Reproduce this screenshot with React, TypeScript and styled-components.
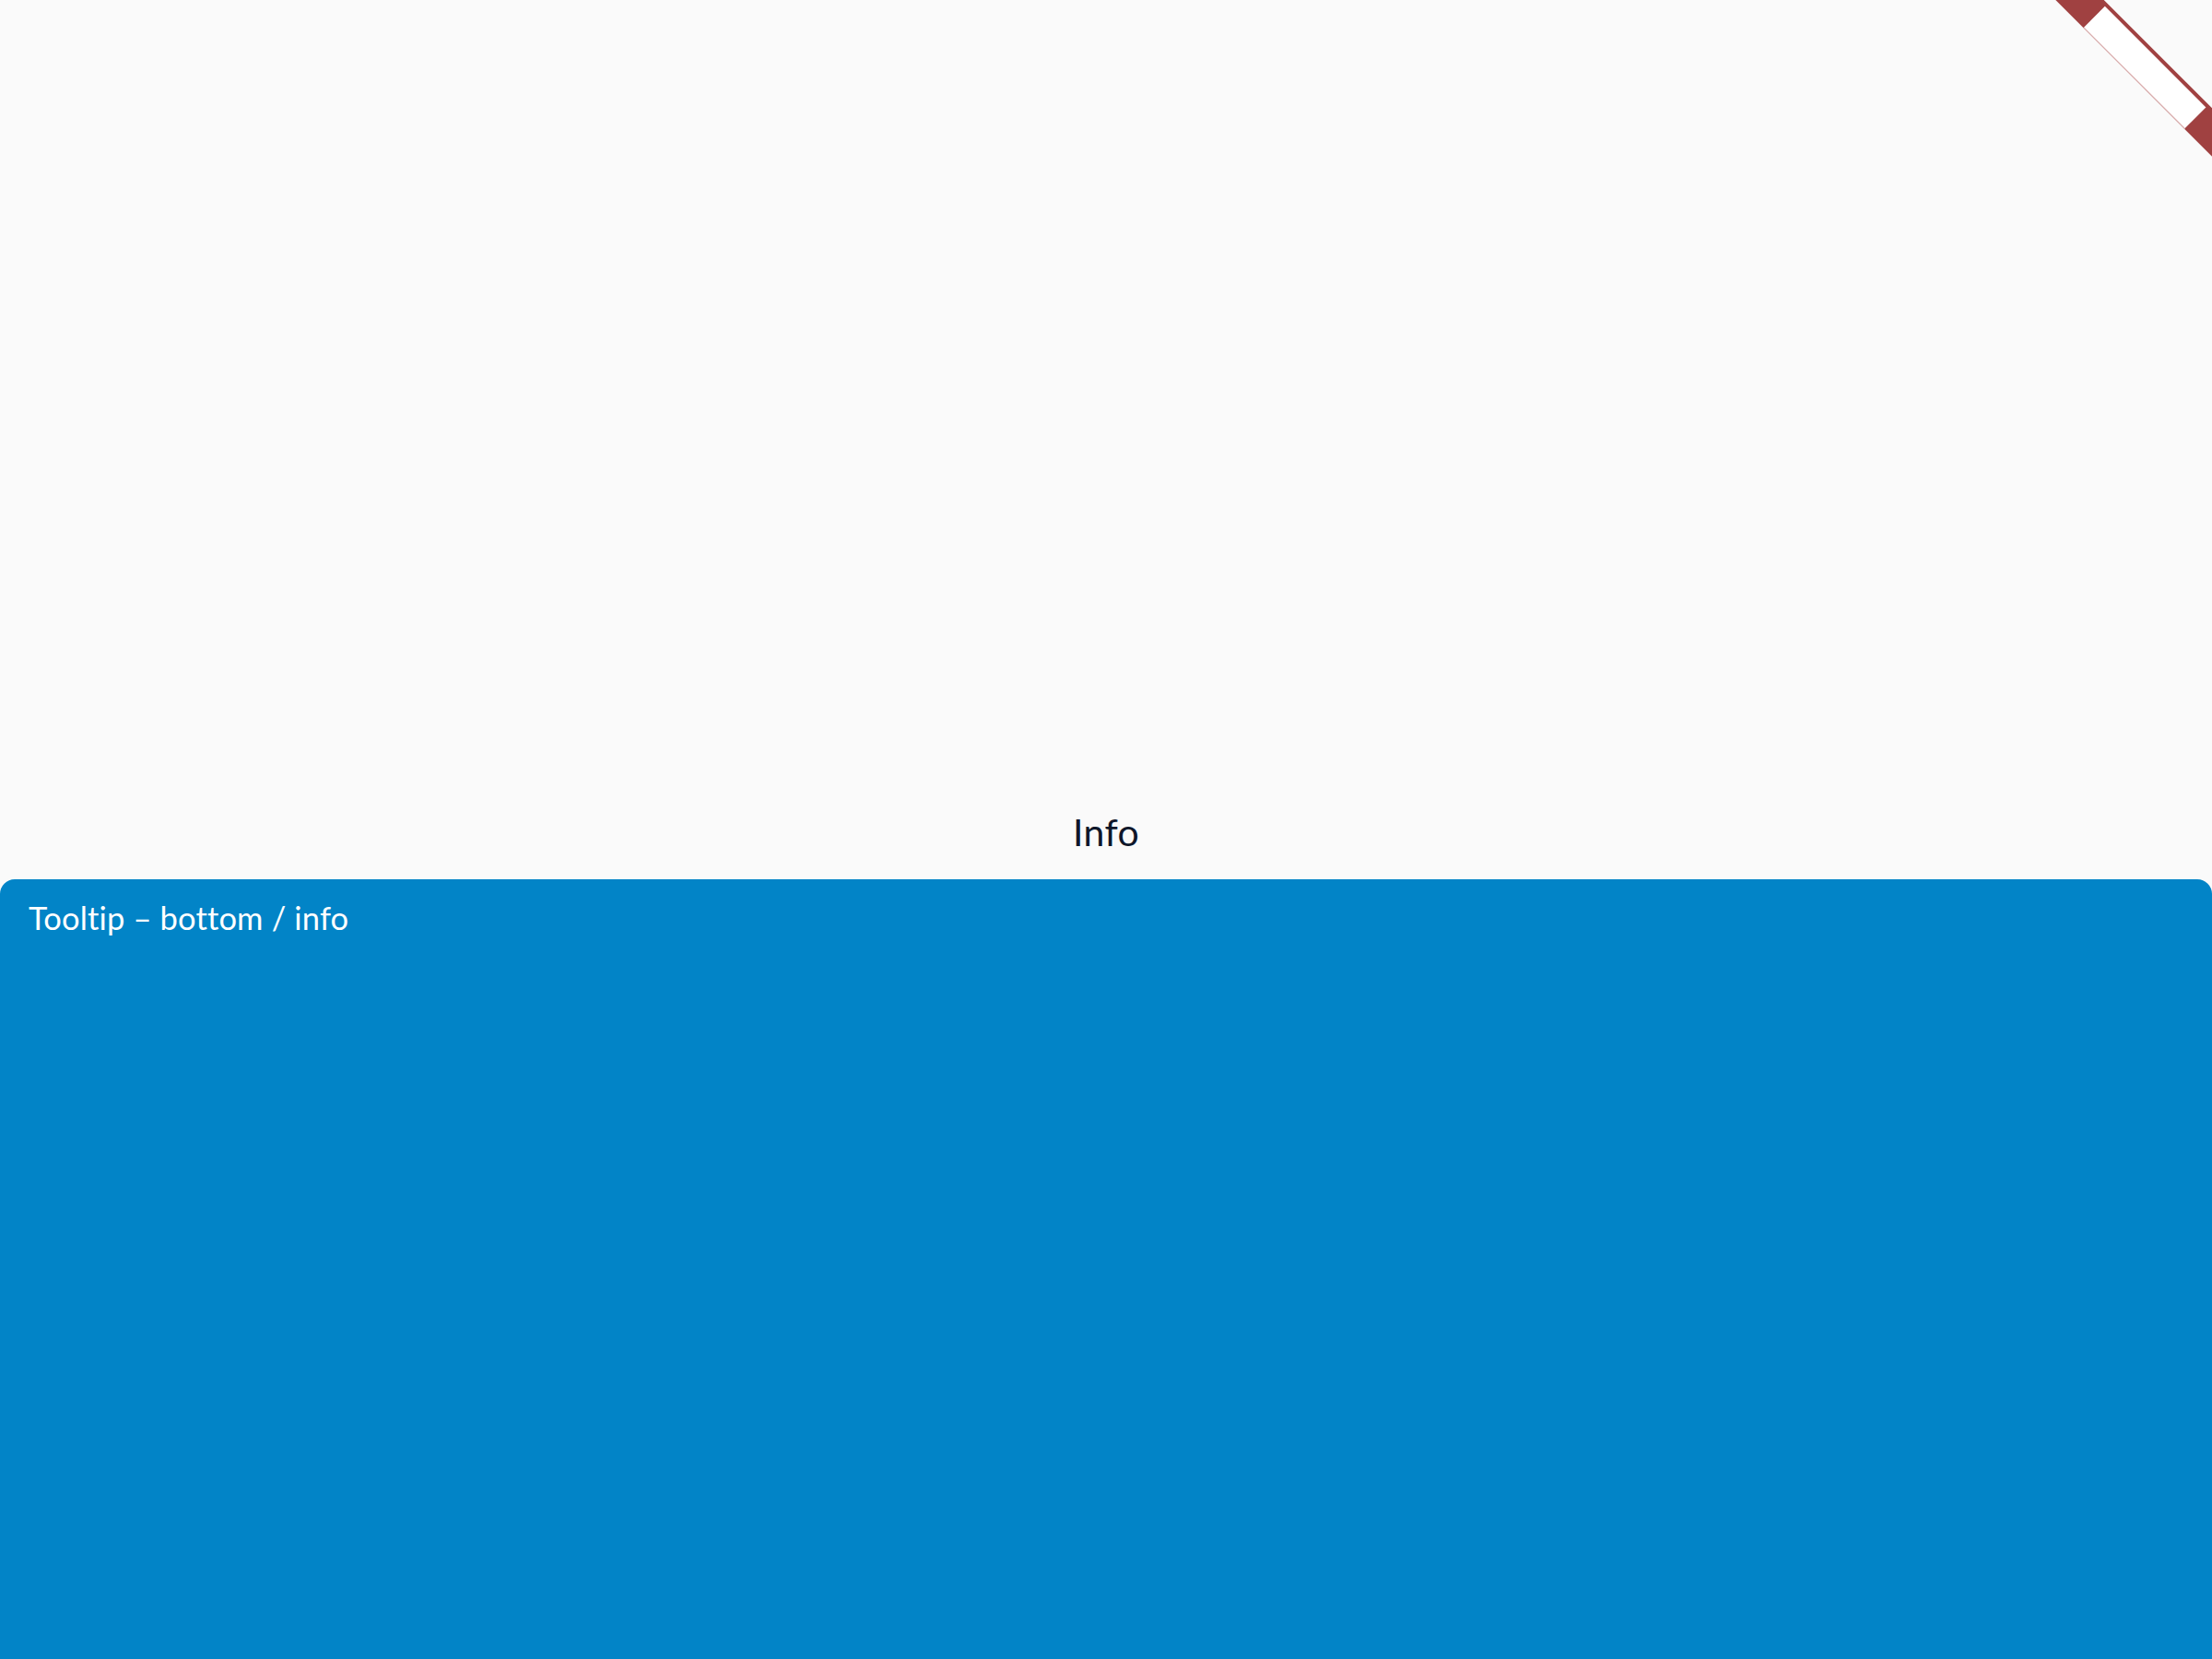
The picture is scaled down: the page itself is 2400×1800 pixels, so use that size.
import React from "react"
import styled, { createGlobalStyle } from "styled-components"

const GlobalStyle = createGlobalStyle`
  html, body {
    margin: 0;
    padding: 0;
    background: #fafafa;
    font-family: "Lato", "Noto Sans", sans-serif;
  }
  #root {
    min-height: 100vh;
  }
`

const Page = styled.div`
  display: flex;
  flex-direction: column;
  height: 100vh;
  overflow: hidden;
`

const Stage = styled.div`
  height: 954px;
  flex-shrink: 0;
  display: flex;
  align-items: flex-end;
  justify-content: center;
  box-sizing: border-box;
  padding-bottom: 31px;
`

const Trigger = styled.span`
  font-size: 41px;
  line-height: 1;
  color: #0f172a;
  letter-spacing: 0.3px;
`

const TooltipPanel = styled.div`
  flex: 1;
  background: #0284c7;
  border-radius: 16px 16px 0 0;
  padding: 21px 31px;
  box-sizing: border-box;
`

const TooltipText = styled.div`
  color: #ffffff;
  font-size: 34.5px;
  line-height: 1.2;
  letter-spacing: 0.15px;
`

const Corner = styled.div`
  position: fixed;
  top: 0;
  right: 0;
  width: 200px;
  height: 200px;
  overflow: hidden;
  pointer-events: none;
`

const Ribbon = styled.div`
  position: absolute;
  left: -32px;
  top: 53px;
  width: 320px;
  height: 37px;
  background: #a04141;
  transform: rotate(45deg);
  display: flex;
  justify-content: center;
  align-items: flex-end;
`

const RibbonLabel = styled.div`
  width: 155px;
  height: 32px;
  background: #ffffff;
  border-bottom: 1px solid #d8aaaa;
`

const App: React.FC = () => {
  return (
    <>
      <GlobalStyle />
      <Page>
        <Stage>
          <Trigger>Info</Trigger>
        </Stage>
        <TooltipPanel>
          <TooltipText>Tooltip – bottom / info</TooltipText>
        </TooltipPanel>
      </Page>
      <Corner>
        <Ribbon>
          <RibbonLabel />
        </Ribbon>
      </Corner>
    </>
  )
}

export default App
